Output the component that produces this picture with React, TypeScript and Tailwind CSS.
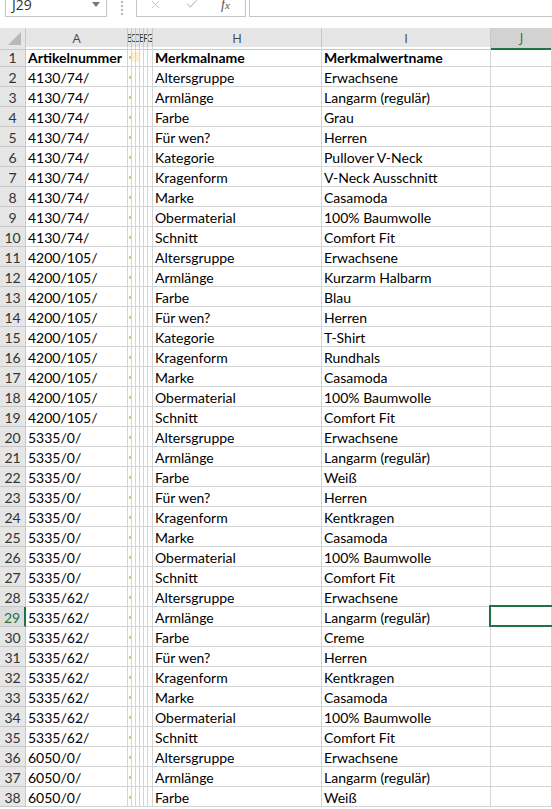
import React from 'react';
import { X, Check } from 'lucide-react';

const data: [string, string, string][] = [
  ['4130/74/', 'Altersgruppe', 'Erwachsene'],
  ['4130/74/', 'Armlänge', 'Langarm (regulär)'],
  ['4130/74/', 'Farbe', 'Grau'],
  ['4130/74/', 'Für wen?', 'Herren'],
  ['4130/74/', 'Kategorie', 'Pullover V-Neck'],
  ['4130/74/', 'Kragenform', 'V-Neck Ausschnitt'],
  ['4130/74/', 'Marke', 'Casamoda'],
  ['4130/74/', 'Obermaterial', '100% Baumwolle'],
  ['4130/74/', 'Schnitt', 'Comfort Fit'],
  ['4200/105/', 'Altersgruppe', 'Erwachsene'],
  ['4200/105/', 'Armlänge', 'Kurzarm Halbarm'],
  ['4200/105/', 'Farbe', 'Blau'],
  ['4200/105/', 'Für wen?', 'Herren'],
  ['4200/105/', 'Kategorie', 'T-Shirt'],
  ['4200/105/', 'Kragenform', 'Rundhals'],
  ['4200/105/', 'Marke', 'Casamoda'],
  ['4200/105/', 'Obermaterial', '100% Baumwolle'],
  ['4200/105/', 'Schnitt', 'Comfort Fit'],
  ['5335/0/', 'Altersgruppe', 'Erwachsene'],
  ['5335/0/', 'Armlänge', 'Langarm (regulär)'],
  ['5335/0/', 'Farbe', 'Weiß'],
  ['5335/0/', 'Für wen?', 'Herren'],
  ['5335/0/', 'Kragenform', 'Kentkragen'],
  ['5335/0/', 'Marke', 'Casamoda'],
  ['5335/0/', 'Obermaterial', '100% Baumwolle'],
  ['5335/0/', 'Schnitt', 'Comfort Fit'],
  ['5335/62/', 'Altersgruppe', 'Erwachsene'],
  ['5335/62/', 'Armlänge', 'Langarm (regulär)'],
  ['5335/62/', 'Farbe', 'Creme'],
  ['5335/62/', 'Für wen?', 'Herren'],
  ['5335/62/', 'Kragenform', 'Kentkragen'],
  ['5335/62/', 'Marke', 'Casamoda'],
  ['5335/62/', 'Obermaterial', '100% Baumwolle'],
  ['5335/62/', 'Schnitt', 'Comfort Fit'],
  ['6050/0/', 'Altersgruppe', 'Erwachsene'],
  ['6050/0/', 'Armlänge', 'Langarm (regulär)'],
  ['6050/0/', 'Farbe', 'Weiß'],
];

const grid = 'grid grid-cols-[26px_102px_4px_4px_4px_4px_4px_5px_169px_169px_1fr]';
const cell = 'h-[20px] border-r border-b border-[#d4d4d4] flex items-center overflow-hidden whitespace-nowrap';
const narrow = ['B', 'C', 'D', 'E', 'F', 'G'];

function Row({ n, a, h, i, bold }: { n: number; a: string; h: string; i: string; bold?: boolean }) {
  const active = n === 29;
  const txt = bold ? 'font-bold' : '';
  return (
    <div className={grid}>
      <div
        className={`h-[20px] border-b border-[#c8c8c8] flex items-center justify-center pt-[1px] text-[14px] ${
          active ? 'bg-[#dcdcdc] text-[#217346] border-r-2 border-r-[#217346]' : 'bg-[#e6e6e6] text-[#333] border-r border-r-[#c8c8c8]'
        }`}
      >
        {n}
      </div>
      <div className={`${cell} pl-[2px] pt-[2px] ${txt}`}>{a}</div>
      {narrow.map((c, k) => (
        <div key={c} className={`${cell} justify-center`}>
          {k === 0 && <span className="w-[2px] h-[3px] bg-[#e0b878] rounded-full mt-[2px]" />}
          {bold && k > 0 && k < 3 && <span className="w-[3px] h-[10px] bg-[#fbf3d6]" />}
        </div>
      ))}
      <div className={`${cell} pl-[2px] pt-[2px] ${txt}`}>{h}</div>
      <div className={`${cell} pl-[2px] pt-[2px] ${txt}`}>{i}</div>
      <div className={`${cell} relative overflow-visible`}>
        {active && <div className="absolute -left-[2px] -top-[2px] -right-[4px] -bottom-[1px] border-2 border-[#217346]" />}
      </div>
    </div>
  );
}

export default function App() {
  return (
    <div className="w-[552px] h-[809px] overflow-hidden bg-white text-black font-['Lato','Liberation_Sans',sans-serif] text-[14px]">
      {/* formula bar */}
      <div className="h-[28px] flex items-start font-['Open_Sans','Liberation_Sans',sans-serif]">
        <div className="ml-[5px] w-[102px] h-[17px] border border-t-0 border-[#c6c6c6] flex items-start justify-between overflow-hidden">
          <span className="pl-[6px] -mt-[4px] text-[14px] leading-[18px] text-[#333]">J29</span>
          <svg width="10" height="6" viewBox="0 0 10 6" className="mr-[5px] mt-[2px]">
            <path d="M1 0 L9 0 L5 5 Z" fill="#777" />
          </svg>
        </div>
        <div className="ml-[14px] flex flex-col gap-[2px] pt-[1px]">
          {[0, 1, 2, 3].map((d) => (
            <span key={d} className="w-[2px] h-[2px] bg-[#b5b5b5]" />
          ))}
        </div>
        <div className="ml-[13px] w-[110px] h-[17px] border border-t-0 border-[#c6c6c6] flex items-start overflow-hidden">
          <X className="ml-[12px] -mt-[2px] w-[13px] h-[13px] text-[#bdbdbd]" strokeWidth={1.6} />
          <Check className="ml-[23px] -mt-[3px] w-[14px] h-[14px] text-[#bdbdbd]" strokeWidth={1.8} />
          <span className="ml-[22px] -mt-[3px] text-[14px] leading-[16px] italic font-['Liberation_Serif',serif] text-[#555]">
            f<span className="text-[11px]">x</span>
          </span>
        </div>
        <div className="ml-[3px] flex-1 h-[17px] border border-t-0 border-r-0 border-[#c6c6c6]" />
      </div>

      {/* column headers */}
      <div className={`${grid} h-[19px] bg-[#e6e6e6] font-['Open_Sans','Liberation_Sans',sans-serif] text-[13px] text-[#444]`}>
        <div className="border-r border-b border-[#c8c8c8] relative">
          <svg width="14" height="14" viewBox="0 0 14 14" className="absolute right-[3px] bottom-[3px]">
            <path d="M13 0 L13 13 L0 13 Z" fill="#b8b8b8" />
          </svg>
        </div>
        <div className="border-r border-b border-[#c8c8c8] flex items-center justify-center">A</div>
        {narrow.map((c) => (
          <div key={c} className="border-r border-b border-[#c8c8c8] flex items-center justify-center overflow-hidden text-[10px] text-[#333]">
            {c}
          </div>
        ))}
        <div className="border-r border-b border-[#c8c8c8] flex items-center justify-center">H</div>
        <div className="border-r border-b border-[#c8c8c8] flex items-center justify-center">I</div>
        <div className="bg-[#d2d2d2] border-b-2 border-[#217346] flex items-center justify-center text-[#217346]">J</div>
      </div>

      <Row n={1} a="Artikelnummer" h="Merkmalname" i="Merkmalwertname" bold />
      {data.map((r, k) => (
        <Row key={k} n={k + 2} a={r[0]} h={r[1]} i={r[2]} />
      ))}
    </div>
  );
}
